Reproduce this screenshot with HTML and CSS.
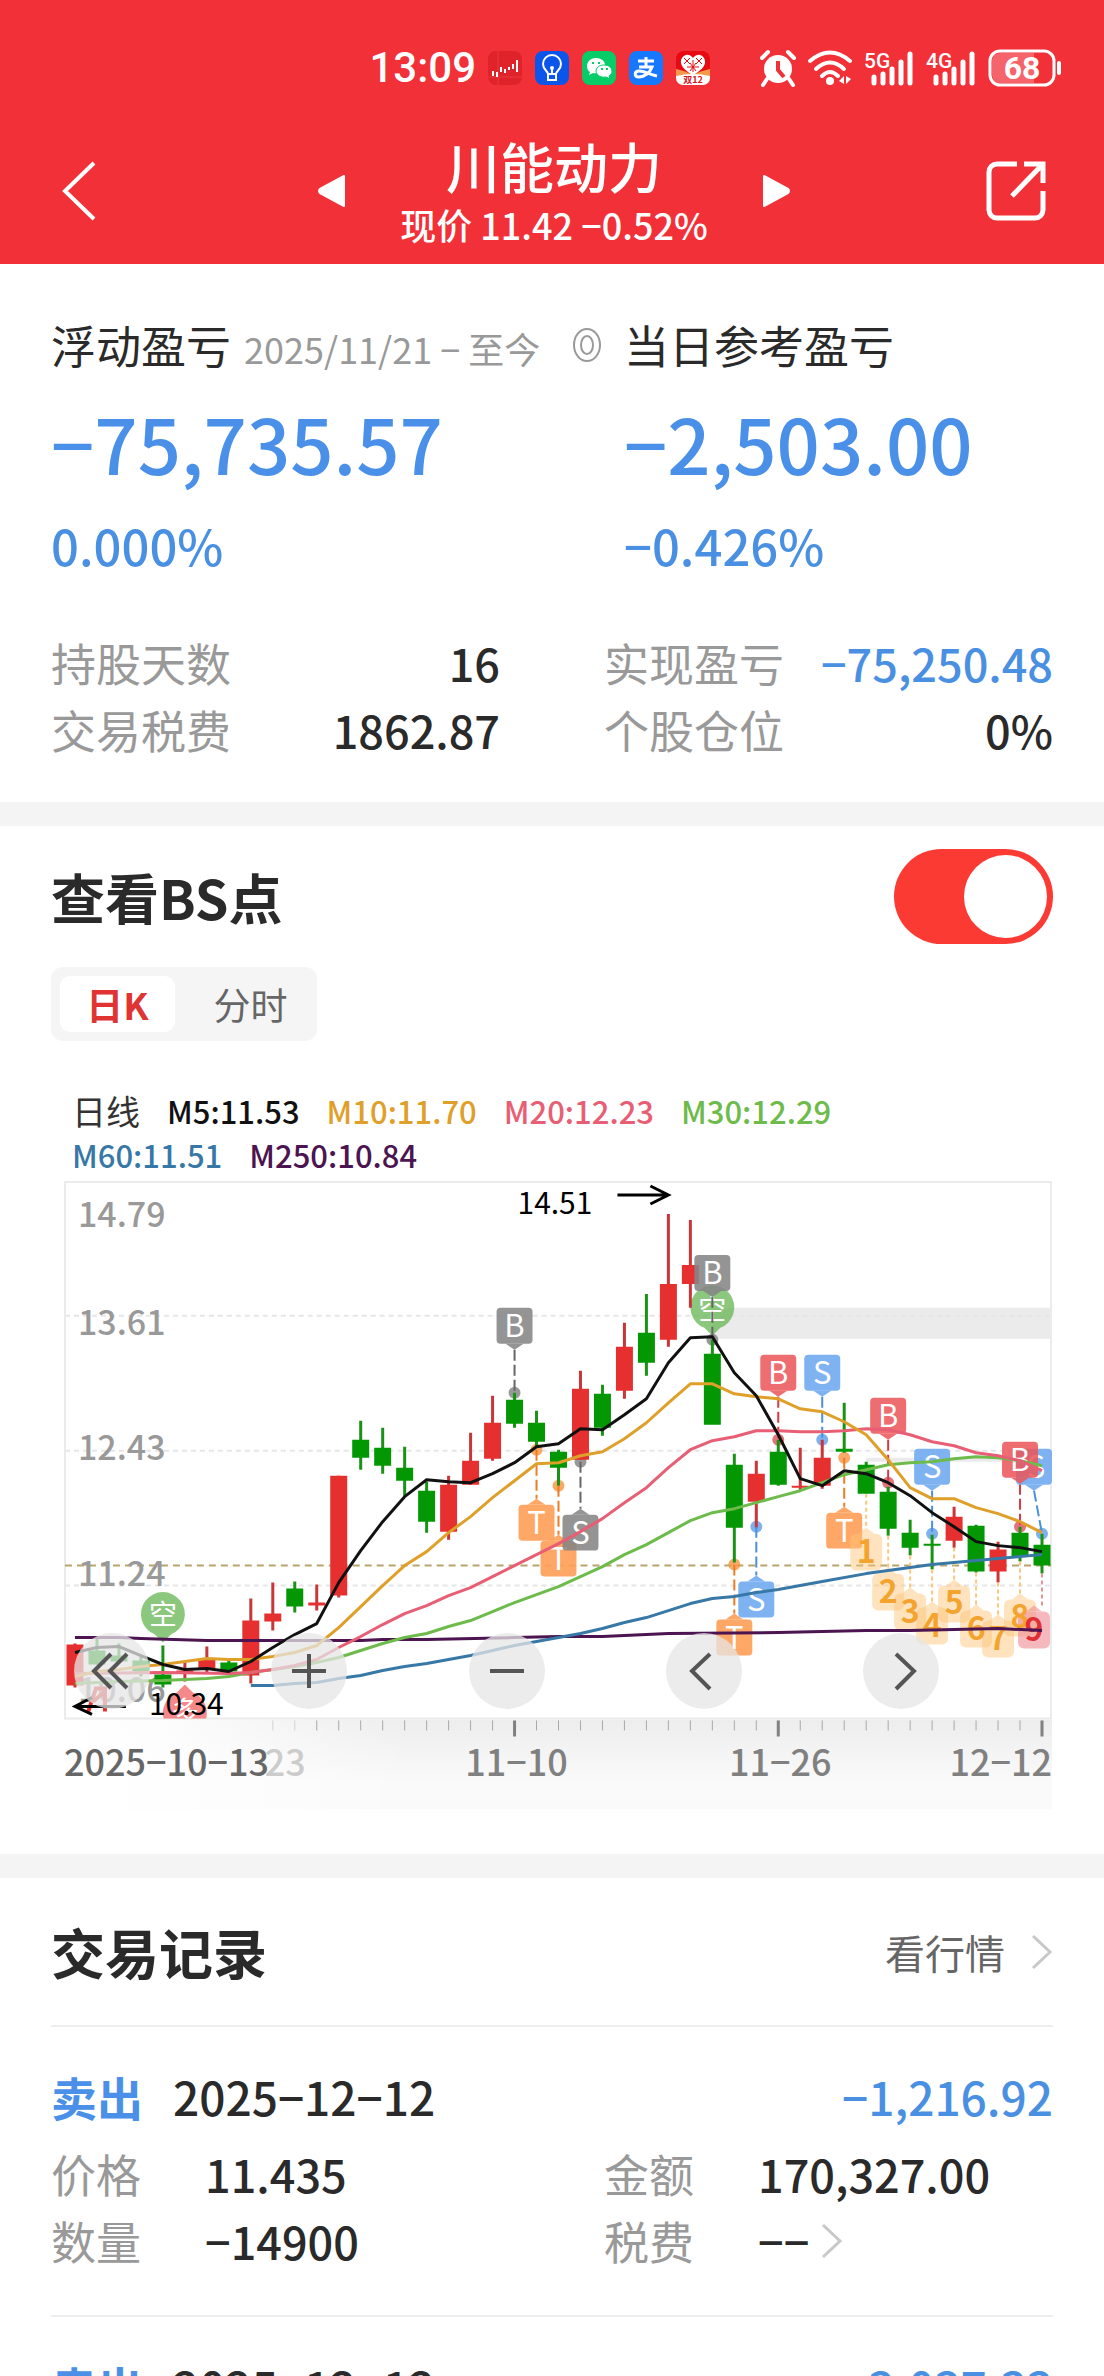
FILE: index.html
```html
<!DOCTYPE html>
<html lang="zh-CN">
<head>
<meta charset="utf-8">
<meta name="viewport" content="width=device-width, initial-scale=1">
<title>川能动力</title>
<link rel="stylesheet" href="styles.css">
</head>
<body>
<div class="app">
  <header class="top">
    <div class="status">
      <span class="clock">13:09</span>
      <div class="apps">
        <svg class="app-icon" viewBox="0 0 34 34"><rect width="34" height="34" rx="8" fill="#e0222a"/><path d="M10 0v34M0 26h34" stroke="#e8383e"/><path d="M5 20v5M9 21v5M13 16v5M17 18v4M21 16v3M25 13v5M29 9v12" stroke="#fff" stroke-width="2"/></svg>
        <svg class="app-icon" viewBox="0 0 34 34"><rect width="34" height="34" rx="8" fill="#0b55ea"/><path d="M13 23c0-3-5-4-5-10a9 9 0 0 1 18 0c0 6-5 7-5 10zM13 24v5h8v-5M17 23v-5" fill="none" stroke="#fff" stroke-width="2"/><circle cx="17" cy="17" r="2" fill="#fff"/></svg>
        <svg class="app-icon" viewBox="0 0 34 34"><rect width="34" height="34" rx="8" fill="#07cc68"/><path d="M14 7c-6 0-9 4-9 8 0 3 1 5 3 6l-1 3 4-2c6 1 12-2 12-8 0-4-4-7-9-7z" fill="#fff"/><path d="M22 14c-5 0-8 3-8 6 0 4 5 7 10 6l4 2-1-3c2-1 3-3 3-5 0-3-3-6-8-6z" fill="#fff" stroke="#07cc68"/><path d="M10 12h2M16 12h2M19 18h2M24 18h2" stroke="#07cc68" stroke-width="2"/></svg>
        <svg class="app-icon" viewBox="0 0 34 34"><rect width="34" height="34" rx="8" fill="#1677ff"/><path d="M9 10h16M17 6v10M10 16h13c-2 6-8 10-13 10-5 0-5-6 0-6 6 0 9 3 18 5" fill="none" stroke="#fff" stroke-width="3"/></svg>
        <svg class="app-icon" viewBox="0 0 34 34"><rect width="34" height="34" rx="8" fill="#e80a12"/><path d="M17 7C12 0 4 5 5 12c1 6 8 9 12 13 4-4 11-7 12-13 1-7-7-12-12-5z" fill="#fff"/><path d="M8 7l6 6m-6 0 6-6M20 7l6 6m-6 0 6-6M17 9v12M11 16h12M14 12l6 8M20 12l-6 8" stroke="#e80a12" stroke-width="1"/><path d="M0 18q10 2 17 6 7-4 17-6v8H0z" fill="#f49a4b"/><path d="M0 25q17-4 34 0v2a7 7 0 0 1-7 7H7a7 7 0 0 1-7-7z" fill="#fff"/><text x="17" y="32" class="tiny">双12</text></svg>
      </div>
      <div class="signals">
        <svg class="alarm" viewBox="0 0 36 36"><circle cx="18" cy="19" r="14" fill="#fff"/><path d="M2 8l6-6M34 8l-6-6M7 29l-4 6M29 29l4 6" stroke="#fff" stroke-width="4" stroke-linecap="round"/><path d="M18 11v9l6 7" fill="none" stroke="#f23038" stroke-width="4"/></svg>
        <svg class="wifi" viewBox="0 0 44 36"><g fill="none" stroke="#fff" stroke-width="4" stroke-linecap="round"><path d="M2 11q20-17 40 0M8 19q14-13 28 0M14 26q8-8 16 0"/></g><circle cx="22" cy="31" r="4" fill="#fff"/><path d="M36 26v8l-5-3zM38 26v8l5-5z" fill="#fff"/></svg>
        <svg class="cell" viewBox="0 0 50 36"><text x="0" y="18" class="net">5G</text><path d="M10 27v6M19 24v9M28 19v14M37 12v21M46 4v29" stroke="#fff" stroke-width="5" stroke-linecap="round"/></svg>
        <svg class="cell" viewBox="0 0 50 36"><text x="0" y="18" class="net">4G</text><path d="M10 27v6M19 24v9M28 19v14M37 12v21M46 4v29" stroke="#fff" stroke-width="5" stroke-linecap="round"/></svg>
        <svg class="battery" viewBox="0 0 76 38"><rect x="2" y="2" width="64" height="34" rx="10" fill="none" stroke="#fff" stroke-width="3"/><path d="M12 4h34v30H12a8 8 0 0 1-8-8V12a8 8 0 0 1 8-8z" fill="#fff" opacity=".25"/><path d="M71 14v10" stroke="#fff" stroke-width="4" stroke-linecap="round"/><text x="34" y="30" class="level">68</text></svg>
      </div>
    </div>
    <div class="nav">
      <button class="icon-btn back" aria-label="返回"><svg width="34" height="60" viewBox="0 0 34 60"><path d="M32 2L3 30l29 28" fill="none" stroke="#fff" stroke-width="4"/></svg></button>
      <div class="switcher">
        <button class="icon-btn" aria-label="上一只"><svg width="28" height="34" viewBox="0 0 28 34"><path d="M26 2v30L2 19q-2-2 0-4z" fill="#fff" stroke="#fff" stroke-linejoin="round" stroke-width="2"/></svg></button>
        <div class="titles"><h1>川能动力</h1><p>现价 11.42 −0.52%</p></div>
        <button class="icon-btn" aria-label="下一只"><svg width="28" height="34" viewBox="0 0 28 34"><path d="M2 2v30l24-13q2-2 0-4z" fill="#fff" stroke="#fff" stroke-linejoin="round" stroke-width="2"/></svg></button>
      </div>
      <button class="icon-btn share" aria-label="分享"><svg width="60" height="60" viewBox="0 0 60 60"><g fill="none" stroke="#fff" stroke-width="5"><path d="M31 3H11a8 8 0 0 0-8 8v38a8 8 0 0 0 8 8h38a8 8 0 0 0 8-8V30"/><path d="M26 35L56 4M38 3h19v19"/></g></svg></button>
    </div>
  </header>

  <main class="content">
    <section class="summary">
      <div class="pnl">
        <div>
          <h2 class="label">浮动盈亏 <small>2025/11/21 − 至今</small></h2>
          <p class="big">−75,735.57</p>
          <p class="pct">0.000%</p>
        </div>
        <svg class="eye" viewBox="0 0 28 36"><g fill="none" stroke="#999" stroke-width="2"><ellipse cx="14" cy="18" rx="13" ry="16"/><ellipse cx="14" cy="18" rx="6" ry="9"/></g></svg>
        <div>
          <h2 class="label">当日参考盈亏</h2>
          <p class="big">−2,503.00</p>
          <p class="pct">−0.426%</p>
        </div>
      </div>
      <dl class="stats">
        <div><dt>持股天数</dt><dd>16</dd></div>
        <div><dt>实现盈亏</dt><dd class="down">−75,250.48</dd></div>
        <div><dt>交易税费</dt><dd>1862.87</dd></div>
        <div><dt>个股仓位</dt><dd>0%</dd></div>
      </dl>
    </section>

    <section class="bs">
      <div class="bs-head">
        <h2 class="heading"><label for="bs-toggle">查看BS点</label></h2>
        <input class="toggle" id="bs-toggle" type="checkbox" role="switch" checked>
      </div>
      <div class="tabs">
        <button class="tab active">日K</button>
        <button class="tab">分时</button>
      </div>
      <div class="legend">
        <span class="period">日线</span><span class="m5">M5:11.53</span><span class="m10">M10:11.70</span><span class="m20">M20:12.23</span><span class="m30">M30:12.29</span><span class="m60">M60:11.51</span><span class="m250">M250:10.84</span>
      </div>
      <div class="chart">
        <svg class="plot" viewBox="0 0 990 630" role="img" aria-label="日线K线图">
          <defs>
            <linearGradient id="shade" x2="0" y2="1"><stop offset="0" stop-color="#ededed"/><stop offset=".7" stop-color="#fafafa"/></linearGradient>
            <linearGradient id="fade"><stop offset="0" stop-color="#fff"/><stop offset=".1" stop-color="#fff" stop-opacity=".85"/><stop offset=".35" stop-color="#fff" stop-opacity="0"/></linearGradient>
            <clipPath id="frame"><path d="M64 1180h990v539H64z"/></clipPath>
            <g id="down"><rect x="-18" y="-42" width="36" height="36" rx="4"/><path d="M-9-6H9L0 0z"/></g>
            <g id="up"><rect x="-18" y="6" width="36" height="36" rx="4"/><path d="M-9 6H9L0 0z"/></g>
            <g id="count"><rect x="-16" y="5" width="32" height="37" rx="6"/><path d="M-8 5H8L0-1z"/></g>
            <path id="pin" d="M-8-8a22 22 0 1 1 16 0L0 0z"/>
          </defs>
          <g transform="translate(-64 -1180)">
            <path d="M65 1720h988v90H65z" fill="url(#shade)"/><path d="M65 1720h988v90H65z" fill="url(#fade)"/>
            <path d="M65 1182h987v537H65z" fill="none" stroke="#ebebeb" stroke-width="2"/>
            <path d="M713 1308h339v31H713zM867 1458h185v4H867z" fill="#ebebeb"/>
            <path d="M65 1316h987M65 1451h987M65 1586h987" stroke="#e6e6e6" stroke-width="2" stroke-dasharray="5 4"/>
            <path d="M65 1566h987" stroke="#b8a46c" stroke-width="2" stroke-dasharray="7 5"/>
            <g class="axis"><text x="78" y="1227">14.79</text><text x="78" y="1335">13.61</text><text x="78" y="1460">12.43</text><text x="78" y="1586">11.24</text><text x="78" y="1703">10.06</text></g>
            <g clip-path="url(#frame)">
              <use href="#pin" x="163" y="1643" class="pin-green"/><text x="163" y="1625" class="pin-text">空</text>
              <use href="#pin" transform="translate(185 1685) rotate(180)" class="pin-red"/><text x="185" y="1723" class="pin-text">多</text>
              <path d="M88 1713l8-24h9v23M93 1702l12-10" fill="none" stroke="#e63030" stroke-width="4"/>
            </g>
            <use href="#pin" x="713" y="1336" class="pin-green"/><text x="713" y="1320" class="pin-text">空</text>
            <g class="dots">
              <path class="c-gray" d="M515 1393h0M581 1462h0M713 1340h0"/>
              <path class="c-orange" d="M537 1450h0M559 1486h0M735 1565h0M845 1458h0"/>
              <path class="c-blue" d="M757 1527h0M823 1440h0M933 1534h0M1043 1534h0"/>
              <path class="c-red" d="M779 1440h0M889 1483h0M1021 1527h0"/>
            </g>
            <g stroke-width="3">
              <path stroke="#c9363a" d="M75 1644v44M185 1663v19M207 1647v26M273 1583v48M251 1599v85M317 1585v26M339 1476v122M449 1476v64M471 1433v52M493 1396v65M581 1371v89M625 1323v76M669 1214v133M691 1220v88M757 1461v67M801 1448v42M823 1440v49M955 1507v41M999 1542v41"/>
              <path stroke="#1a9216" d="M97 1638v27M119 1644v18M141 1656v21M163 1646v42M229 1659v14M295 1582v31M361 1421v49M383 1428v46M405 1447v50M427 1482v51M515 1393v35M537 1411v36M559 1450v36M603 1385v51M647 1294v82M713 1340v15M735 1454v109M779 1440v46M845 1403v50M867 1462v32M889 1487v49M911 1520v36M933 1535v35M977 1525v48M1021 1527v35M1043 1534v40"/>
            </g>
            <g stroke-width="17">
              <path stroke="#e63030" d="M75 1645v41M185 1671v3M207 1660v9M251 1621v55M273 1614v8M317 1603v3M339 1476v120M449 1485v47M471 1461v24M493 1423v36M581 1389v71M625 1347v44M669 1284v56M691 1265v19M757 1474v28M801 1486v2M823 1458v28M955 1517v24M999 1550v22"/>
              <path stroke="#039803" d="M97 1651v14M119 1656v6M141 1661v11M163 1675v10M229 1663v9M295 1589v18M361 1440v18M383 1448v18M405 1468v13M427 1491v31M515 1400v24M537 1423v19M559 1452v16M603 1394v34M647 1333v30M713 1354v71M735 1465v63M779 1452v33M845 1449v3M867 1465v29M889 1492v37M911 1533v15M933 1544v2M977 1526v46M1021 1533v24M1043 1545v21"/>
            </g>
            <g class="leads">
              <path stroke="#666" d="M515 1350v43M713 1297v43M581 1462v47"/>
              <path stroke="#ea7d25" d="M537 1450v49M559 1486v49M735 1565v49M845 1458v49"/>
              <path stroke="#4d8fd8" d="M757 1527v49M823 1397v43M933 1491v43M1035 1491l8 43"/>
              <path stroke="#d23b42" d="M779 1397v43M889 1440v43M1021 1484v43"/>
            </g>
            <path d="M867 1494v35M889 1536v33M911 1556v32M933 1570v33M955 1548v32M977 1573v32M999 1583v33M1021 1562v33" stroke="#fbc77c" stroke-width="2" stroke-dasharray="4 3"/>
            <path d="M1043 1574v34" stroke="#e99498" stroke-width="2" stroke-dasharray="4 3"/>
            <g class="f-orange"><use href="#up" x="537" y="1499"/><use href="#up" x="559" y="1535"/><use href="#up" x="735" y="1614"/><use href="#up" x="845" y="1507"/></g>
            <g class="badge"><text x="537" y="1534">T</text><text x="559" y="1570">T</text><text x="735" y="1649">T</text><text x="845" y="1542">T</text></g>
            <g class="f-gray"><use href="#down" x="515" y="1350"/><use href="#down" x="713" y="1297"/><use href="#up" x="581" y="1509"/></g>
            <g class="f-blue"><use href="#up" x="757" y="1576"/><use href="#down" x="823" y="1397"/><use href="#down" x="933" y="1491"/><use href="#down" x="1035" y="1491"/></g>
            <g class="badge"><text x="515" y="1337">B</text><text x="713" y="1284">B</text><text x="581" y="1544">S</text><text x="757" y="1611">S</text><text x="823" y="1384">S</text><text x="933" y="1478">S</text><text x="1037" y="1478">S</text></g>
            <g class="f-red"><use href="#down" x="779" y="1397"/><use href="#down" x="889" y="1440"/><use href="#down" x="1021" y="1484"/></g>
            <g class="badge"><text x="779" y="1384">B</text><text x="889" y="1427">B</text><text x="1021" y="1471">B</text></g>
            <g class="f-count"><use href="#count" x="867" y="1529"/><use href="#count" x="889" y="1569"/><use href="#count" x="911" y="1589"/><use href="#count" x="933" y="1603"/><use href="#count" x="955" y="1581"/><use href="#count" x="977" y="1606"/><use href="#count" x="999" y="1616"/><use href="#count" x="1021" y="1595"/></g>
            <use href="#count" x="1035" y="1607" fill="#ef8c92" opacity=".6"/>
            <g class="counts"><text x="867" y="1563">1</text><text x="889" y="1603">2</text><text x="911" y="1623">3</text><text x="933" y="1637">4</text><text x="955" y="1614">5</text><text x="977" y="1640">6</text><text x="999" y="1650">7</text><text x="1021" y="1628">8</text><text x="1035" y="1641" class="nine">9</text></g>
            <g class="ma">
              <polyline stroke="#4c1450" points="75,1638 119,1638 141,1639 207,1641 361,1641 383,1640 427,1640 515,1638 559,1637 603,1637 669,1634 779,1633 867,1631 911,1631 955,1630 999,1629 1043,1631"/>
              <polyline stroke="#3878a6" points="251,1686 273,1686 295,1684 317,1683 339,1679 361,1676 383,1671 405,1667 427,1664 449,1660 471,1656 493,1651 515,1646 537,1642 559,1638 581,1634 603,1629 625,1623 647,1618 669,1611 691,1604 713,1599 735,1597 757,1593 779,1590 823,1582 867,1574 911,1568 933,1565 955,1563 977,1561 999,1559 1021,1557 1043,1555"/>
              <polyline stroke="#6dbb4b" points="75,1684 119,1682 163,1681 207,1679 229,1677 251,1673 273,1670 295,1667 317,1663 339,1658 361,1651 383,1644 405,1638 427,1634 449,1627 471,1621 493,1612 515,1603 537,1595 559,1587 581,1577 603,1567 625,1555 647,1545 669,1533 691,1521 713,1513 735,1509 757,1503 779,1497 801,1491 823,1483 845,1475 867,1470 889,1465 911,1463 933,1462 955,1459 977,1457 999,1458 1021,1461 1043,1466"/>
              <polyline stroke="#e75e75" points="75,1674 163,1673 229,1674 251,1673 273,1670 295,1666 317,1660 339,1648 361,1637 383,1625 405,1614 427,1606 449,1596 471,1588 493,1577 515,1566 537,1555 559,1544 581,1532 603,1519 625,1503 647,1488 669,1468 691,1450 713,1441 735,1437 757,1431 779,1431 801,1432 823,1432 845,1431 867,1429 889,1430 911,1435 933,1442 955,1446 977,1453 999,1456 1021,1461 1043,1471"/>
              <polyline stroke="#dfa02a" points="75,1677 97,1672 119,1670 141,1667 163,1665 185,1662 207,1659 229,1660 251,1660 273,1657 295,1653 317,1646 339,1628 361,1607 383,1586 405,1566 427,1552 449,1533 471,1517 493,1498 515,1481 537,1464 559,1463 581,1456 603,1452 625,1439 647,1423 669,1403 691,1384 713,1384 735,1394 757,1397 779,1399 801,1409 823,1412 845,1422 867,1435 889,1460 911,1488 933,1499 955,1499 977,1508 999,1514 1021,1522 1043,1533"/>
              <polyline stroke="#111" points="75,1653 97,1648 119,1647 141,1656 163,1665 185,1670 207,1669 229,1672 251,1662 273,1648 295,1635 317,1624 339,1583 361,1551 383,1522 405,1497 427,1480 449,1482 471,1483 493,1474 515,1463 537,1447 559,1444 581,1429 603,1430 625,1415 647,1399 669,1363 691,1338 713,1337 735,1373 757,1396 779,1435 801,1479 823,1486 845,1471 867,1474 889,1483 911,1496 933,1513 955,1527 977,1542 999,1546 1021,1548 1043,1552"/>
            </g>
            <g fill="none" stroke="#000" stroke-width="3"><path d="M618 1195h50M651 1186l18 9-18 9"/><path d="M126 1707H76M92 1698l-17 9 17 8"/></g>
            <g class="extreme"><text x="518" y="1214">14.51</text><text x="149" y="1716">10.34</text></g>
            <path d="M317 1721v10M339 1721v10M361 1721v10M383 1721v10M405 1721v10M427 1721v10M449 1721v10M471 1721v10M493 1721v10M537 1721v10M559 1721v10M581 1721v10M603 1721v10M625 1721v10M647 1721v10M669 1721v10M691 1721v10M713 1721v10M735 1721v10M757 1721v10M801 1721v10M823 1721v10M845 1721v10M867 1721v10M889 1721v10M911 1721v10M933 1721v10M955 1721v10M977 1721v10M999 1721v10M1021 1721v10" stroke="#a8a8a8"/>
            <path d="M273 1721v10M295 1721v10" stroke="#d4d4d4"/>
            <path d="M515 1721v16M779 1721v16M1043 1721v16" stroke="#808080" stroke-width="3"/>
            <g class="dates"><text x="265" y="1777" fill="#ccc">23</text><text x="64" y="1777" fill="#666">2025−10−13</text><text x="517" y="1777" class="mid">11−10</text><text x="781" y="1777" class="mid">11−26</text><text x="1053" y="1777" class="end">12−12</text></g>
          </g>
        </svg>
        <div class="controls">
          <button class="ctl" aria-label="最早"><svg viewBox="0 0 76 76"><path d="M37 21L20 38l17 17M53 21L36 38l17 17"/></svg></button>
          <button class="ctl" aria-label="放大"><svg viewBox="0 0 76 76"><path d="M38 21v34M21 38h34"/></svg></button>
          <button class="ctl" aria-label="缩小"><svg viewBox="0 0 76 76"><path d="M21 38h34"/></svg></button>
          <button class="ctl" aria-label="左移"><svg viewBox="0 0 76 76"><path d="M44 21L26 38l18 18"/></svg></button>
          <button class="ctl" aria-label="右移"><svg viewBox="0 0 76 76"><path d="M33 21l18 17-18 18"/></svg></button>
        </div>
      </div>
    </section>

    <section class="trades">
      <div class="trades-head">
        <h2 class="heading">交易记录</h2>
        <a class="more" href="#">看行情 <svg class="chev" viewBox="0 0 22 34"><path d="M2 1l17 16L2 33"/></svg></a>
      </div>
      <article class="trade">
        <div class="trade-head"><b>卖出</b><time datetime="2025-12-12">2025−12−12</time><span class="down">−1,216.92</span></div>
        <dl class="facts">
          <div><dt>价格</dt><dd>11.435</dd></div>
          <div><dt>金额</dt><dd>170,327.00</dd></div>
          <div><dt>数量</dt><dd>−14900</dd></div>
          <div><dt>税费</dt><dd>−− <svg class="chev" viewBox="0 0 22 34"><path d="M2 1l17 16L2 33"/></svg></dd></div>
        </dl>
      </article>
      <article class="trade">
        <div class="trade-head"><b>卖出</b><time datetime="2025-12-12">2025−12−12</time><span class="down">−3,037.33</span></div>
      </article>
    </section>
  </main>
</div>
</body>
</html>
```
FILE: styles.css
```css
* { box-sizing: border-box; }
body, h1, h2, p, dl, dd { margin: 0; }
body {
  background: #fff;
  color: #2a2a2a;
  font-family: "Noto Sans CJK SC", sans-serif;
  font-size: 45px;
  line-height: 66px;
}
button { border: 0; padding: 0; background: none; font: inherit; color: inherit; }
svg { display: block; flex: none; overflow: visible; }

.app { display: flex; flex-direction: column; height: 100vh; }
.content { flex: 1; min-height: 0; overflow-y: auto; scrollbar-width: none; }

/* header */
.top { background: #f23038; color: #fff; padding-top: 44px; }
.status { display: flex; align-items: center; justify-content: flex-end; height: 48px; padding-right: 40px; }
.clock { font: 500 42px/48px Roboto, sans-serif; }
.apps { display: flex; gap: 13px; margin: 0 50px 0 12px; }
.app-icon { width: 34px; height: 34px; }
.signals { display: flex; align-items: center; gap: 12px; }
.alarm { width: 36px; height: 36px; }
.wifi { width: 44px; height: 36px; }
.cell { width: 50px; height: 36px; }
.battery { width: 76px; height: 38px; }
.tiny { font-size: 9px; font-weight: 700; fill: #d8141b; text-anchor: middle; }
.net { font: 500 21px Roboto, sans-serif; fill: #fff; }
.level { font: 700 32px Roboto, sans-serif; fill: #fff; text-anchor: middle; }

.nav { display: flex; justify-content: space-between; align-items: center; height: 172px; padding: 26px 58px 0 62px; }
.icon-btn { display: flex; align-items: center; justify-content: center; }
.back, .share { width: 60px; height: 60px; }
.back { justify-content: flex-start; }
.switcher { display: flex; align-items: center; gap: 54px; }
.titles { text-align: center; padding-top: 2px; }
h1 { font-size: 54px; line-height: 64px; font-weight: 500; }
.titles p { font-size: 36px; line-height: 52px; font-weight: 500; }

/* summary */
.summary { padding: 48px 51px 39px; border-bottom: 24px solid #f4f4f4; }
.pnl { display: grid; grid-template-columns: 522px 28px 1fr; }
.pnl > div:last-child { padding-left: 23px; }
.label { font-size: 45px; line-height: 66px; font-weight: 400; white-space: nowrap; }
.label small { margin-left: 3px; font-size: 36px; line-height: 40px; color: #999; }
.big { font-size: 76px; line-height: 100px; font-weight: 500; color: #4a90e8; margin-top: 14px; }
.pct { font-size: 49px; line-height: 70px; font-weight: 500; color: #4a90e2; margin-top: 18px; }
.eye { width: 28px; height: 36px; margin-top: 15px; }
.stats { display: grid; grid-template-columns: 449px 1fr; column-gap: 104px; row-gap: 1px; margin-top: 50px; }
.stats > div { display: flex; justify-content: space-between; }
dt { color: #999; }
dd { font-weight: 500; }
.down { color: #4a90e2; font-weight: 500; }

/* chart */
.bs { padding: 23px 51px 45px; border-bottom: 24px solid #f4f4f4; }
.bs-head { display: flex; justify-content: space-between; align-items: center; }
.heading { font-size: 54px; line-height: 80px; font-weight: 700; }
.toggle { appearance: none; width: 159px; height: 95px; margin: 0; padding: 6px; border-radius: 48px; background: #ccc; display: flex; }
.toggle::before { content: ""; width: 83px; height: 83px; border-radius: 50%; background: #fff; }
.toggle:checked { background: #fb3b33; justify-content: flex-end; }
.tabs { display: inline-flex; gap: 18px; margin-top: 23px; padding: 9px; border-radius: 12px; background: #f5f5f5; vertical-align: top; }
.tab { min-width: 115px; height: 56px; padding: 0 20px; border-radius: 10px; font-size: 37px; line-height: 54px; color: #666; }
.tab.active { background: #fff; color: #e03433; font-weight: 700; }
.legend { display: flex; flex-wrap: wrap; column-gap: 27px; margin: 48px 160px 0 21px; font-size: 31px; line-height: 44px; font-weight: 500; color: #333; }
.period { font-size: 34px; font-weight: 400; }
.m5 { color: #111; }
.m10 { color: #dfa02a; }
.m20 { color: #e75e75; }
.m30 { color: #6dbb4b; }
.m60 { color: #3878a6; }
.m250 { color: #4c1450; }
.chart { position: relative; margin: 3px 0 0 13px; }
.plot { width: 100%; height: auto; }
.axis { font-size: 34px; font-weight: 500; fill: #999; }
.extreme { font-size: 30px; fill: #000; }
.dates { font-size: 36px; font-weight: 500; fill: #808080; }
.mid { text-anchor: middle; }
.end { text-anchor: end; }
.dots { stroke-width: 12px; stroke-linecap: round; opacity: .8; }
.c-gray { stroke: #808080; }
.c-orange { stroke: #fb9440; }
.c-blue { stroke: #5f9fec; }
.c-red { stroke: #dd5258; }
.leads { stroke-width: 2px; stroke-dasharray: 11 4; }
.f-gray { fill: #858585; fill-opacity: .88; }
.f-orange { fill: #ff9d55; fill-opacity: .9; }
.f-blue { fill: #74acf0; fill-opacity: .93; }
.f-red { fill: #ea5558; fill-opacity: .86; }
.f-count { fill: #fdc578; fill-opacity: .48; }
.badge { font-size: 31px; fill: #fff; text-anchor: middle; }
.counts { font-size: 32px; font-weight: 700; fill: #f3a32e; text-anchor: middle; }
.nine { fill: #e03036; }
.pin-green { fill: #67b554; fill-opacity: .76; }
.pin-red { fill: #f26b6b; fill-opacity: .8; }
.pin-text { font-size: 28px; fill: #fff; text-anchor: middle; }
.ma { fill: none; stroke-width: 3px; stroke-linejoin: round; }
.controls { position: absolute; left: 1%; right: 11.5%; top: 72%; display: flex; justify-content: space-between; }
.ctl { width: 76px; height: 76px; border-radius: 50%; background: rgba(230, 230, 230, .75); }
.ctl path { fill: none; stroke: #555; stroke-width: 4px; }

/* trades */
.trades { padding: 0 51px; }
.trades-head { display: flex; justify-content: space-between; align-items: center; height: 149px; border-bottom: 2px solid #eee; }
.more { display: flex; align-items: center; gap: 26px; color: #666; font-size: 40px; text-decoration: none; }
.chev { width: 22px; height: 34px; }
.chev path { fill: none; stroke: #c8c8c8; stroke-width: 3px; }
.trade { padding: 36px 0 41px; border-bottom: 2px solid #eee; }
.trade-head { display: flex; align-items: center; font-size: 46px; font-weight: 500; }
.trade-head b { color: #4a90e8; font-weight: 700; }
.trade-head time { margin-left: 30px; }
.trade-head .down { margin-left: auto; }
.facts { display: grid; grid-template-columns: 553px 1fr; row-gap: 1px; margin-top: 12px; }
.facts > div { display: flex; gap: 64px; }
.facts dd { display: flex; align-items: center; gap: 12px; }
```
